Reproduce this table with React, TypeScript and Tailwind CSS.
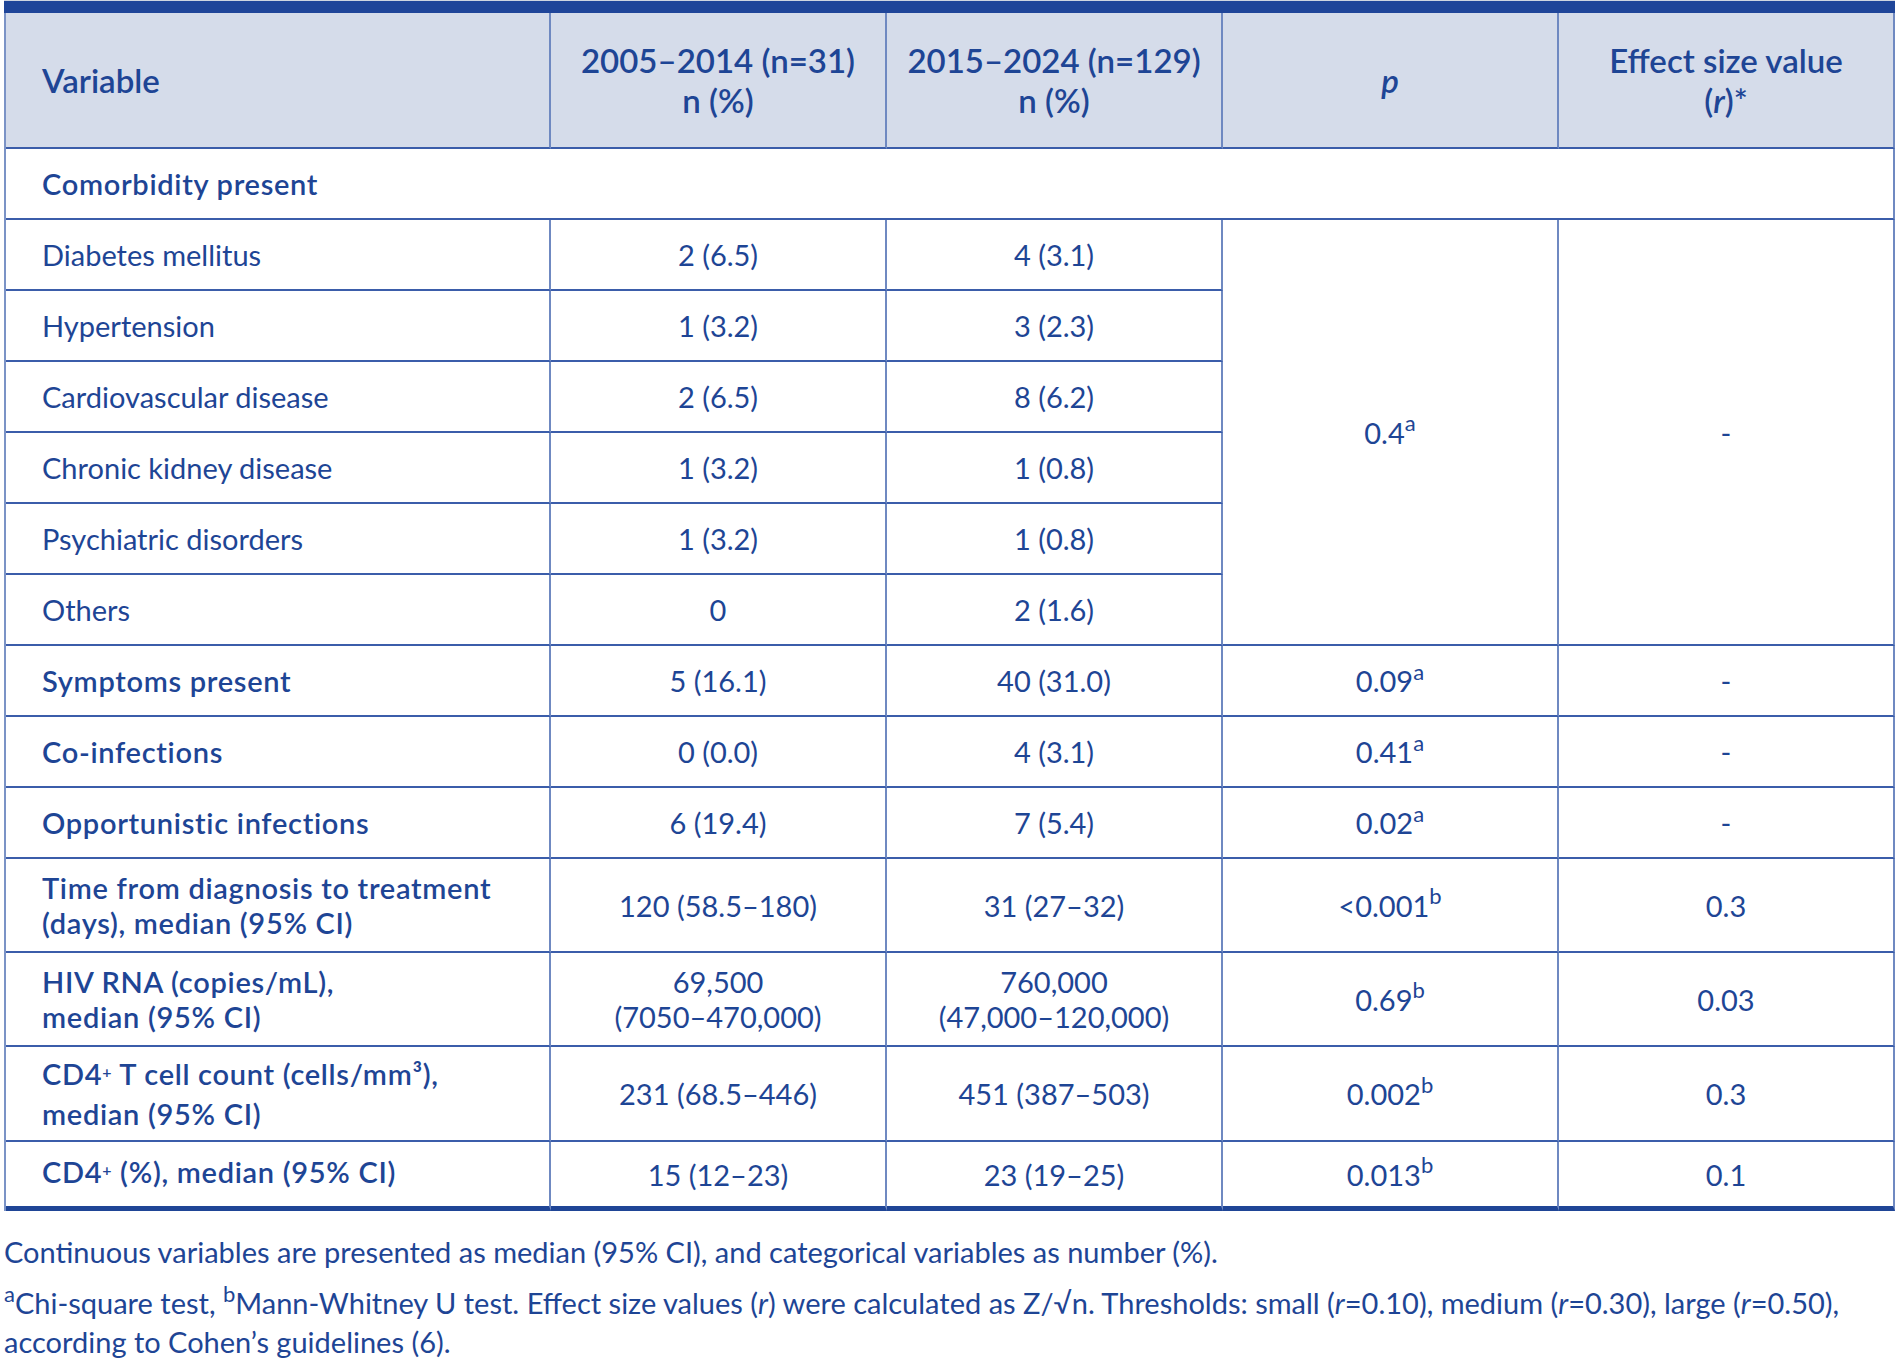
import type { ReactNode } from "react";

const hLine = "border-b-2 border-b-[#3b5daa]";
const vLine = "border-r-2 border-r-[#6f89c1]";

function Sup({ children }: { children: ReactNode }) {
  return <sup className="text-[0.76em] -top-[0.55em]">{children}</sup>;
}

const comorbidities = [
  ["Diabetes mellitus", "2 (6.5)", "4 (3.1)"],
  ["Hypertension", "1 (3.2)", "3 (2.3)"],
  ["Cardiovascular disease", "2 (6.5)", "8 (6.2)"],
  ["Chronic kidney disease", "1 (3.2)", "1 (0.8)"],
  ["Psychiatric disorders", "1 (3.2)", "1 (0.8)"],
  ["Others", "0", "2 (1.6)"],
];

type Row = {
  label: ReactNode;
  a: ReactNode;
  b: ReactNode;
  p: ReactNode;
  r: string;
  h: string;
};

const plus = <span className="relative -top-[0.45em] text-[0.55em]">+</span>;

const rows: Row[] = [
  { label: "Symptoms present", a: "5 (16.1)", b: "40 (31.0)", p: <>0.09<Sup>a</Sup></>, r: "-", h: "h-[71px]" },
  { label: "Co-infections", a: "0 (0.0)", b: "4 (3.1)", p: <>0.41<Sup>a</Sup></>, r: "-", h: "h-[71px]" },
  { label: "Opportunistic infections", a: "6 (19.4)", b: "7 (5.4)", p: <>0.02<Sup>a</Sup></>, r: "-", h: "h-[71px]" },
  {
    label: <>Time from diagnosis to treatment<br />(days), median (95% CI)</>,
    a: "120 (58.5–180)",
    b: "31 (27–32)",
    p: <>&lt;0.001<Sup>b</Sup></>,
    r: "0.3",
    h: "h-[94px]",
  },
  {
    label: <>HIV RNA (copies/mL),<br />median (95% CI)</>,
    a: <>69,500<br />(7050–470,000)</>,
    b: <>760,000<br />(47,000–120,000)</>,
    p: <>0.69<Sup>b</Sup></>,
    r: "0.03",
    h: "h-[94px]",
  },
  {
    label: <>CD4{plus} T cell count (cells/mm³),<br />median (95% CI)</>,
    a: "231 (68.5–446)",
    b: "451 (387–503)",
    p: <>0.002<Sup>b</Sup></>,
    r: "0.3",
    h: "h-[95px]",
  },
  {
    label: <>CD4{plus} (%), median (95% CI)</>,
    a: "15 (12–23)",
    b: "23 (19–25)",
    p: <>0.013<Sup>b</Sup></>,
    r: "0.1",
    h: "h-[69px]",
  },
];

export default function App() {
  return (
    <div className="min-h-screen bg-white pl-[4px] font-['Lato',sans-serif] text-[#1e4595]">
      <div className="w-[1891px]">
        <div className="h-[13px] border-t border-t-[#cfd5e0] bg-[#1f4599]" />
        <table className="w-full table-fixed border-separate border-spacing-0 border-l-2 border-l-[#7b93c6] text-[29px] leading-[35px]">
          <colgroup>
            <col className="w-[545px]" />
            <col className="w-[336px]" />
            <col className="w-[336px]" />
            <col className="w-[336px]" />
            <col className="w-[336px]" />
          </colgroup>
          <thead>
            <tr className="h-[136px] bg-[#d5dcea] text-[33px] leading-[40px]">
              <th className={`${hLine} ${vLine} px-[36px] text-left font-semibold`}>Variable</th>
              <th className={`${hLine} ${vLine} text-center font-semibold`}>
                2005–2014 (n=31)
                <br />n (%)
              </th>
              <th className={`${hLine} ${vLine} text-center font-semibold`}>
                2015–2024 (n=129)
                <br />n (%)
              </th>
              <th className={`${hLine} ${vLine} text-center font-semibold italic`}>p</th>
              <th className={`${hLine} ${vLine} text-center font-semibold`}>
                Effect size value
                <br />(<i>r</i>)*
              </th>
            </tr>
          </thead>
          <tbody>
            <tr className="h-[71px]">
              <td colSpan={5} className={`${hLine} ${vLine} px-[36px] font-semibold tracking-[0.7px]`}>
                Comorbidity present
              </td>
            </tr>
            {comorbidities.map(([label, a, b], i) => (
              <tr key={label} className="h-[71px]">
                <td className={`${hLine} ${vLine} px-[36px]`}>{label}</td>
                <td className={`${hLine} ${vLine} text-center`}>{a}</td>
                <td className={`${hLine} ${vLine} text-center`}>{b}</td>
                {i === 0 && (
                  <>
                    <td rowSpan={6} className={`${hLine} ${vLine} text-center`}>
                      0.4<Sup>a</Sup>
                    </td>
                    <td rowSpan={6} className={`${hLine} ${vLine} text-center`}>
                      -
                    </td>
                  </>
                )}
              </tr>
            ))}
            {rows.map((row, i) => {
              const last = i === rows.length - 1;
              const bottom = last ? "border-b-[5px] border-b-[#1f4596]" : hLine;
              return (
                <tr key={i} className={row.h}>
                  <td className={`${bottom} ${vLine} px-[36px] font-semibold tracking-[0.7px]`}>{row.label}</td>
                  <td className={`${bottom} ${vLine} text-center`}>{row.a}</td>
                  <td className={`${bottom} ${vLine} text-center`}>{row.b}</td>
                  <td className={`${bottom} ${vLine} text-center`}>{row.p}</td>
                  <td className={`${bottom} ${vLine} text-center`}>{row.r}</td>
                </tr>
              );
            })}
          </tbody>
        </table>
        <div className="pt-[21px] text-[29px] leading-[39px]">
          <p>
            Continuous variables are presented as median (95% CI), and categorical variables as number (%).
          </p>
          <p className="mt-[12px]">
            <Sup>a</Sup>Chi-square test, <Sup>b</Sup>Mann-Whitney U test. Effect size values (<i>r</i>) were
            calculated as Z/√n. Thresholds: small (<i>r</i>=0.10), medium (<i>r</i>=0.30), large (<i>r</i>=0.50),
            <br />
            according to Cohen’s guidelines (6).
          </p>
        </div>
      </div>
    </div>
  );
}
